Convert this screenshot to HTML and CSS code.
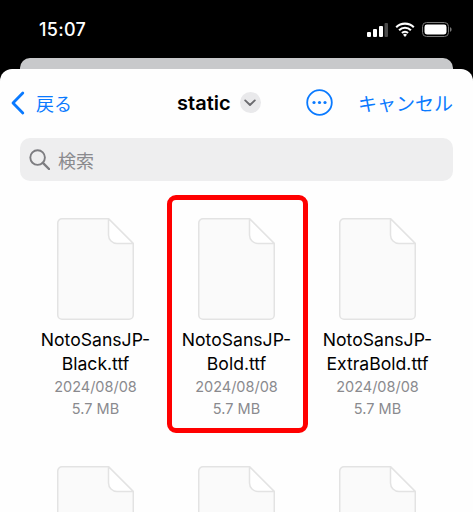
FILE: index.html
```html
<!DOCTYPE html>
<html lang="ja">
<head>
  <meta charset="UTF-8">
  <meta name="viewport" content="width=device-width, initial-scale=1.0">
  <title>static</title>
  <link rel="stylesheet" href="styles.css">
</head>
<body>
  <svg class="sprite" width="0" height="0" aria-hidden="true">
    <symbol id="file-icon" viewBox="0 0 77 102">
      <path d="M5 .75H51.5L76.25 25.5V97a4.25 4.25 0 0 1-4.25 4.25H5A4.25 4.25 0 0 1 .75 97V5A4.25 4.25 0 0 1 5 .75Z" fill="#fafafa" stroke="#e3e3e3" stroke-width="1.5"/>
      <path d="M51.5 .75V17a8.5 8.5 0 0 0 8.5 8.5H76.25L51.5 .75Z" fill="#fff" stroke="#e3e3e3" stroke-width="1.5" stroke-linejoin="round"/>
    </symbol>
  </svg>

  <div class="status-bar">
    <span class="clock">15:07</span>
    <div class="status-icons">
      <svg width="21" height="14" viewBox="0 0 21 14">
        <rect x="0" y="9" width="4" height="5" rx="1" fill="#fff"/>
        <rect x="6" y="6" width="4" height="8" rx="1" fill="#fff"/>
        <rect x="12" y="3" width="4" height="11" rx="1" fill="#fff"/>
        <rect x="17.5" y="0" width="3.5" height="14" rx="1" fill="#4a4a4a"/>
      </svg>
      <svg width="20" height="15" viewBox="0 0 20 15">
        <path d="M1.2 5.2a12.6 12.6 0 0 1 17.6 0M4.1 8.2a8.4 8.4 0 0 1 11.8 0M7 11a4.2 4.2 0 0 1 6 0" fill="none" stroke="#fff" stroke-width="2.1"/>
        <path d="M10 15l-2-2.3a2.8 2.8 0 0 1 4 0z" fill="#fff"/>
      </svg>
      <svg width="30" height="15" viewBox="0 0 30 15">
        <rect x=".5" y=".5" width="26" height="14" rx="4" fill="none" stroke="#777"/>
        <rect x="2.5" y="2.5" width="22" height="10" rx="2.4" fill="#fff"/>
        <path d="M28 5.2c1 .3 1.6 1.2 1.6 2.3s-.6 2-1.6 2.3z" fill="#777"/>
      </svg>
    </div>
  </div>

  <div class="sheet-behind"></div>

  <div class="sheet">
    <div class="nav-bar">
      <div class="back">
        <svg width="15" height="24" viewBox="0 0 15 24">
          <path d="M12.8 2 3 12l9.8 10" fill="none" stroke="#0a7aff" stroke-width="2.8" stroke-linecap="round" stroke-linejoin="round"/>
        </svg>
        <span>戻る</span>
      </div>
      <div class="title">
        <span>static</span>
        <span class="title-chevron">
          <svg width="12" height="8" viewBox="0 0 12 8">
            <path d="M1.2 1.4 6 6l4.8-4.6" fill="none" stroke="#6b6b6f" stroke-width="1.9" stroke-linecap="round" stroke-linejoin="round"/>
          </svg>
        </span>
      </div>
      <div class="nav-actions">
        <svg width="27" height="27" viewBox="0 0 27 27">
          <circle cx="13.5" cy="13.5" r="12.3" fill="none" stroke="#0a7aff" stroke-width="1.8"/>
          <circle cx="8" cy="13.5" r="1.6" fill="#0a7aff"/>
          <circle cx="13.5" cy="13.5" r="1.6" fill="#0a7aff"/>
          <circle cx="19" cy="13.5" r="1.6" fill="#0a7aff"/>
        </svg>
        <span>キャンセル</span>
      </div>
    </div>

    <div class="search-box">
      <svg width="21" height="21" viewBox="0 0 21 21">
        <circle cx="8.6" cy="8.6" r="7.3" fill="none" stroke="#7d7d81" stroke-width="1.9"/>
        <path d="M13.9 13.9 20 20" fill="none" stroke="#7d7d81" stroke-width="2.4" stroke-linecap="round"/>
      </svg>
      <span>検索</span>
    </div>

    <div class="file-grid">
      <div class="file">
        <svg class="file-icon"><use href="#file-icon"/></svg>
        <div class="file-name">NotoSansJP-<br>Black.ttf</div>
        <div class="file-meta">2024/08/08</div>
        <div class="file-meta">5.7 MB</div>
      </div>
      <div class="file file-marked">
        <svg class="file-icon"><use href="#file-icon"/></svg>
        <div class="file-name">NotoSansJP-<br>Bold.ttf</div>
        <div class="file-meta">2024/08/08</div>
        <div class="file-meta">5.7 MB</div>
      </div>
      <div class="file">
        <svg class="file-icon"><use href="#file-icon"/></svg>
        <div class="file-name">NotoSansJP-<br>ExtraBold.ttf</div>
        <div class="file-meta">2024/08/08</div>
        <div class="file-meta">5.7 MB</div>
      </div>
      <div class="file"><svg class="file-icon"><use href="#file-icon"/></svg></div>
      <div class="file"><svg class="file-icon"><use href="#file-icon"/></svg></div>
      <div class="file"><svg class="file-icon"><use href="#file-icon"/></svg></div>
    </div>
  </div>
</body>
</html>
```

FILE: styles.css
```css
* {
  margin: 0;
  padding: 0;
  box-sizing: border-box;
}

html, body {
  height: 512px;
  overflow: hidden;
}

body {
  background: #000;
  font-family: 'Inter', 'Noto Sans CJK JP', sans-serif;
  color: #000;
}

.sprite {
  position: absolute;
}

.status-bar {
  height: 58px;
  padding: 0 21px 0 39px;
  display: flex;
  align-items: flex-start;
  justify-content: space-between;
}

.clock {
  margin-top: 19px;
  color: #fff;
  font-size: 18px;
  line-height: 22px;
  font-weight: 500;
  letter-spacing: 0.3px;
}

.status-icons {
  margin-top: 22px;
  display: flex;
  align-items: center;
  gap: 7px;
}

.sheet-behind {
  height: 11px;
  margin: 0 20px;
  background: #c8c9cb;
  border-radius: 10px 10px 0 0;
}

.sheet {
  height: 443px;
  background: #fefefe;
  border-radius: 12px 12px 0 0;
  overflow: hidden;
}

.nav-bar {
  height: 67px;
  margin-bottom: 2px;
  padding: 0 20px 0 10px;
  display: flex;
  align-items: center;
}

.back {
  display: flex;
  align-items: center;
  gap: 11px;
  color: #0a7aff;
  font-size: 18px;
}

.title {
  margin-left: 105px;
  display: flex;
  align-items: center;
  gap: 9px;
  font-size: 20px;
  font-weight: 600;
}

.title-chevron {
  width: 21px;
  height: 21px;
  border-radius: 50%;
  background: #e9e9eb;
  display: flex;
  align-items: center;
  justify-content: center;
}

.nav-actions {
  margin-left: auto;
  display: flex;
  align-items: center;
  gap: 25px;
  color: #0a7aff;
  font-size: 19px;
}

.search-box {
  height: 43px;
  margin: 0 20px;
  padding-left: 9px;
  display: flex;
  align-items: center;
  gap: 8px;
  background: #eeeeef;
  border-radius: 10px;
  color: #8a8a8e;
  font-size: 18px;
}

.file-grid {
  margin: 14px 0 0 25px;
  display: grid;
  grid-template-columns: repeat(3, 141px);
  row-gap: 10px;
}

.file {
  position: relative;
  height: 238px;
  padding-top: 23px;
  display: flex;
  flex-direction: column;
  align-items: center;
}

.file-marked::after {
  content: '';
  position: absolute;
  top: 0;
  left: 1px;
  width: 141px;
  height: 238px;
  box-sizing: border-box;
  border: 5px solid #ff0000;
  border-radius: 9px;
}

.file-icon {
  width: 77px;
  height: 102px;
  margin-bottom: 8px;
}

.file-name {
  font-size: 17.6px;
  line-height: 24px;
  text-align: center;
}

.file-meta {
  color: #8a8a8e;
  font-size: 14.5px;
  line-height: 22px;
}
```
